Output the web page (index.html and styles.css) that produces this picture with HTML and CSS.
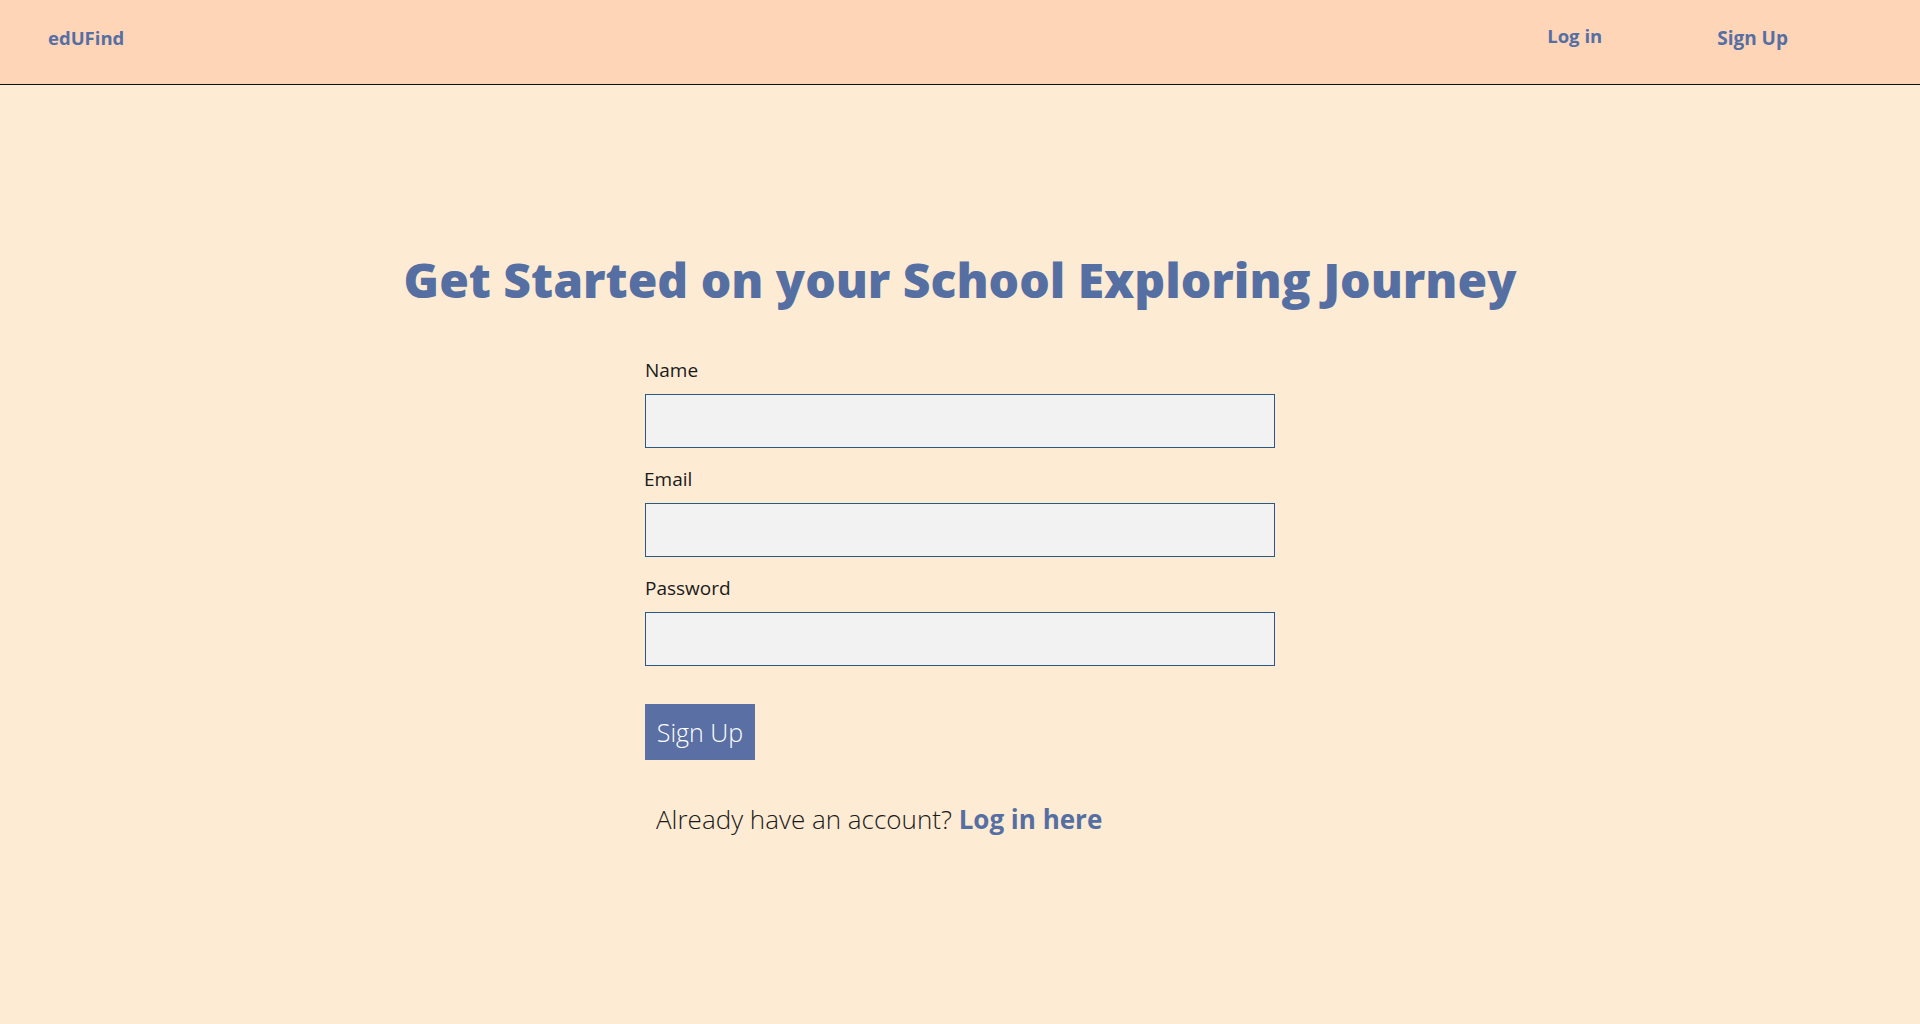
FILE: index.html
```html
<!DOCTYPE html>
<html lang="en">
<head>
<meta charset="utf-8">
<title>edUFind - Sign Up</title>
<link rel="stylesheet" href="styles.css">
</head>
<body>
<header class="topbar">
  <a class="brand" href="#">edUFind</a>
  <nav class="nav">
    <a class="nav-link nav-login" href="#">Log in</a>
    <a class="nav-link nav-signup" href="#">Sign Up</a>
  </nav>
</header>
<main class="main">
  <h1 class="title">Get Started on your School Exploring Journey</h1>
  <form class="form">
    <label class="label" for="name">Name</label>
    <input class="field" id="name" type="text">
    <label class="label label-email" for="email">Email</label>
    <input class="field" id="email" type="email">
    <label class="label" for="password">Password</label>
    <input class="field" id="password" type="password">
    <button class="submit" type="button">Sign Up</button>
    <p class="already">Already have an account? <a class="login-here" href="#">Log in here</a></p>
  </form>
</main>
</body>
</html>
```
FILE: styles.css
```css
html, body {
  margin: 0;
  padding: 0;
}
body {
  background: #fdebd3;
  font-family: "Open Sans", "Noto Sans", sans-serif;
  color: #1a1a1a;
  min-height: 1024px;
}
a {
  text-decoration: none;
}
.topbar {
  box-sizing: border-box;
  height: 85px;
  background: #ffd5b8;
  border-bottom: 1px solid #111;
  display: flex;
  align-items: center;
  padding-left: 48px;
}
.brand {
  color: #566fa3;
  font-weight: 700;
  font-size: 18.5px;
  margin-top: -10px;
}
.nav {
  display: flex;
  margin-left: auto;
  margin-right: 132px;
  margin-top: -8px;
}
.nav-link {
  color: #566fa3;
  font-weight: 700;
  font-size: 19px;
}
.nav-login {
  font-size: 18.5px;
  margin-right: 115px;
  margin-top: -2px;
}
.main {
  padding-top: 166px;
}
.title {
  margin: 0;
  text-align: center;
  color: #566fa3;
  font-size: 48px;
  font-weight: 800;
  line-height: 58px;
}
.form {
  display: flex;
  flex-direction: column;
  align-items: flex-start;
  width: 630px;
  margin: 49px auto 0;
}
.label {
  font-size: 19px;
  font-weight: 400;
  line-height: 24px;
  color: #1a1a1a;
  margin-bottom: 12px;
}
.label-email {
  margin-left: -1px;
}
.field {
  box-sizing: border-box;
  width: 630px;
  height: 54px;
  background: #f2f2f2;
  border: 1px solid #2b5885;
  border-radius: 0;
  margin: 0 0 19px 0;
  padding: 0 10px;
  font: inherit;
}
.submit {
  margin-top: 19px;
  box-sizing: border-box;
  width: 110px;
  height: 56px;
  border: none;
  background: #5a6fa3;
  color: #fff;
  font-family: "Open Sans", "Noto Sans", sans-serif;
  font-weight: 300;
  font-size: 25px;
  padding: 0;
}
.already {
  margin: 41px 0 0 11px;
  font-size: 26px;
  line-height: 36px;
  font-weight: 300;
  color: #1a1a1a;
}
.login-here {
  color: #566fa3;
  font-weight: 700;
}
```
